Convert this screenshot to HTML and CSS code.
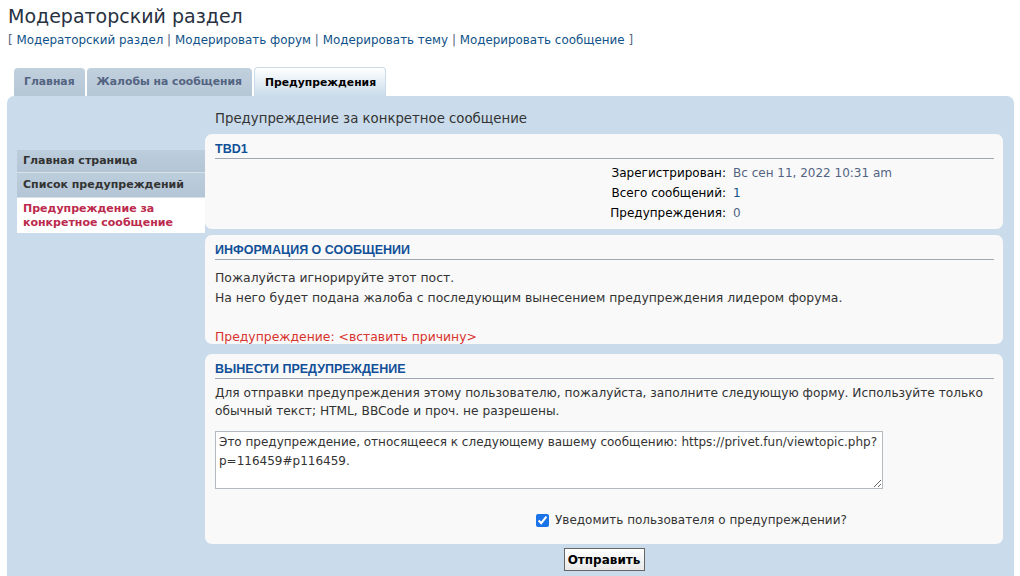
FILE: index.html
```html
<!DOCTYPE html>
<html lang="ru">
<head>
<meta charset="utf-8">
<title>Модераторский раздел</title>
<link rel="stylesheet" href="styles.css">
</head>
<body>
<h1 class="page-title">Модераторский раздел</h1>
<p class="crumbs">[ <a href="#">Модераторский раздел</a> | <a href="#">Модерировать форум</a> | <a href="#">Модерировать тему</a> | <a href="#">Модерировать сообщение</a> ]</p>

<div class="tabs">
  <a class="tab" href="#">Главная</a>
  <a class="tab" href="#">Жалобы на сообщения</a>
  <a class="tab active" href="#">Предупреждения</a>
</div>

<div class="panel">
  <ul class="menu">
    <li class="menu-item">Главная страница</li>
    <li class="menu-item">Список предупреждений</li>
    <li class="menu-item current">Предупреждение за конкретное сообщение</li>
  </ul>

  <div class="main">
    <h2 class="main-title">Предупреждение за конкретное сообщение</h2>

    <div class="card card-profile">
      <h3 class="card-head plain">TBD1</h3>
      <dl class="profile">
        <dt>Зарегистрирован:</dt><dd class="muted">Вс сен 11, 2022 10:31 am</dd>
        <dt>Всего сообщений:</dt><dd><a href="#">1</a></dd>
        <dt>Предупреждения:</dt><dd class="muted">0</dd>
      </dl>
    </div>

    <div class="card card-post">
      <h3 class="card-head">Информация о сообщении</h3>
      <div class="post">
        Пожалуйста игнорируйте этот пост.<br>
        На него будет подана жалоба с последующим вынесением предупреждения лидером форума.<br>
        <br>
        <span class="warn">Предупреждение: &lt;вставить причину&gt;</span>
      </div>
    </div>

    <div class="card card-form">
      <h3 class="card-head">Вынести предупреждение</h3>
      <p class="explain">Для отправки предупреждения этому пользователю, пожалуйста, заполните следующую форму. Используйте только обычный текст; HTML, BBCode и проч. не разрешены.</p>
      <textarea class="reason">Это предупреждение, относящееся к следующему вашему сообщению: https://privet.fun/viewtopic.php?p=116459#p116459.</textarea>
      <label class="notify"><input type="checkbox" checked> Уведомить пользователя о предупреждении?</label>
    </div>

    <div class="submit-row">
      <button class="submit" type="button">Отправить</button>
    </div>
  </div>
</div>
</body>
</html>
```

FILE: styles.css
```css
html, body {
  margin: 0;
  padding: 0;
  background: #ffffff;
}

body {
  padding: 0 6px 0 7px;
  font-family: "DejaVu Sans", Verdana, sans-serif;
  color: #333333;
  overflow: hidden;
}

a {
  color: #105289;
  text-decoration: none;
}

.page-title {
  margin: 0;
  padding: 4px 0 0 1px;
  font-family: "DejaVu Sans", sans-serif;
  font-weight: normal;
  font-size: 19px;
  line-height: 24px;
  color: #28313F;
}

.crumbs {
  margin: 5px 0 0 1px;
  font-size: 11.9px;
  line-height: 14px;
  color: #536482;
}

.tabs {
  display: flex;
  gap: 2px;
  margin: 20px 0 0 7px;
  height: 29px;
  align-items: flex-end;
}

.tab {
  display: block;
  height: 28px;
  line-height: 28px;
  padding: 0 10px;
  border-radius: 4px 4px 0 0;
  background: linear-gradient(#c1d0dd, #b5c6d5);
  color: #536482;
  font-size: 10.8px;
  font-weight: bold;
  box-sizing: border-box;
}

.tab.active {
  height: 29px;
  line-height: 29px;
  padding: 0 9px 0 10px;
  background: linear-gradient(#ffffff, #cadceb);
  color: #000000;
  border: 1px solid #cadceb;
  border-bottom: none;
}

.panel {
  display: flex;
  align-items: flex-start;
  background: #cadceb;
  border-radius: 7px 7px 0 0;
  padding: 0 11px 20px 10px;
  min-height: 470px;
}

.menu {
  list-style: none;
  margin: 54px 0 0 0;
  padding: 0;
  width: 188px;
  flex: none;
}

.menu-item {
  padding: 4px 6px 4px 6px;
  font-size: 11px;
  font-weight: bold;
  line-height: 14px;
  color: #333333;
  background: linear-gradient(#bccddc, #b4c6d6);
  border-bottom: 1px solid #d6e1ea;
}

.menu-item + .menu-item {
  padding-top: 5px;
  padding-bottom: 5px;
}

.menu-item.current {
  background: #ffffff;
  color: #bc2a4d;
  padding: 4px 6px 3px 6px;
  border-bottom: none;
}

.main {
  flex: 1;
  min-width: 0;
}

.main-title {
  margin: 0;
  padding: 14px 0 0 10px;
  height: 24px;
  font-weight: normal;
  font-size: 13.3px;
  line-height: 18px;
  color: #333333;
}

.card {
  display: flow-root;
  background: #f9f9f9;
  border-radius: 7px;
  padding: 8px 9px 6px 10px;
  margin-bottom: 6px;
}

.card-head {
  margin: 0;
  padding: 0 0 1px 0;
  border-bottom: 1px solid #a0a8b4;
  font-family: "Liberation Sans", Arial, sans-serif;
  font-size: 12.5px;
  line-height: 15px;
  font-weight: bold;
  text-transform: uppercase;
  color: #115098;
}

.card-head.plain {
  text-transform: none;
}

.profile {
  display: grid;
  grid-template-columns: 511px 1fr;
  column-gap: 7px;
  row-gap: 0;
  margin: 4px 0 0 0;
  font-size: 12px;
  line-height: 20px;
}

.profile dt {
  text-align: right;
  color: #000000;
}

.profile dd {
  margin: 0;
}

.profile .muted {
  color: #536482;
}

.card-post {
  padding-bottom: 0;
  margin-bottom: 10px;
}

.post {
  margin: 8px 0 -2px 0;
  font-size: 12.4px;
  line-height: 19.5px;
  color: #333333;
}

.warn {
  color: #d8332e;
}

.card-form {
  padding-bottom: 14px;
}

.explain {
  margin: 5px 0 0 0;
  font-size: 12.2px;
  line-height: 18px;
  color: #333333;
}

.reason {
  display: block;
  width: 668px;
  height: 58px;
  box-sizing: border-box;
  margin: 11px 0 0 0;
  padding: 1px 3px;
  border: 1px solid #b4bac0;
  font-family: "DejaVu Sans", Verdana, sans-serif;
  font-size: 12px;
  line-height: 19px;
  color: #333333;
  background: #ffffff;
  resize: both;
}

.notify {
  display: flex;
  align-items: center;
  gap: 6px;
  margin: 21px 0 0 321px;
  font-size: 12px;
  line-height: 20px;
  color: #333333;
}

.notify input {
  margin: 0;
  width: 13px;
  height: 13px;
  accent-color: #1a73e8;
}

.submit-row {
  display: flex;
  justify-content: center;
}

.submit {
  margin-top: -2px;
  width: 81px;
  height: 23px;
  padding: 0;
  border: 1px solid #666666;
  background: linear-gradient(#ffffff, #e9e9e9);
  font-family: "DejaVu Sans", Verdana, sans-serif;
  font-size: 12px;
  font-weight: bold;
  color: #000000;
}
```
